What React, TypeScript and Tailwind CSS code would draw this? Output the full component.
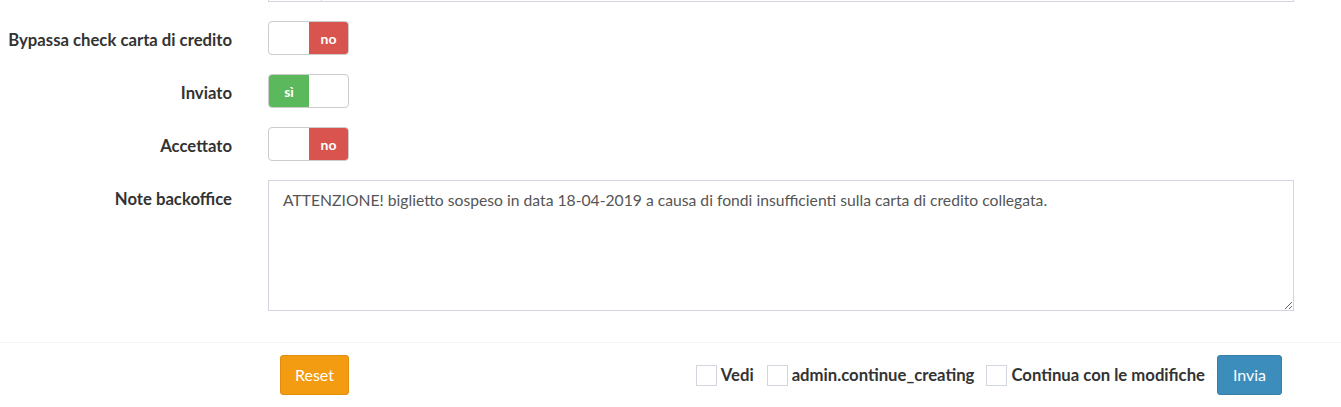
import React from "react";

function Toggle({ on }: { on: boolean }) {
  return (
    <div className="flex h-[34px] w-[81px] overflow-hidden rounded-[4px] border border-[#cccccc] bg-white">
      {on ? (
        <>
          <div className="flex w-[40px] items-center justify-center bg-[#5cb85c] text-[14px] font-bold text-white">sì</div>
          <div className="flex-1" />
        </>
      ) : (
        <>
          <div className="flex-1" />
          <div className="flex w-[39px] items-center justify-center bg-[#d9534f] text-[14px] font-bold text-white">no</div>
        </>
      )}
    </div>
  );
}

function Row({ label, children }: { label: string; children: React.ReactNode }) {
  return (
    <div className="flex">
      <div className="w-[232px] shrink-0 pt-[9px] text-right text-[16.7px] font-bold leading-[20px] text-[#333333]">{label}</div>
      <div className="ml-[36px]">{children}</div>
    </div>
  );
}

function Check({ label }: { label: string }) {
  return (
    <label className="flex items-center">
      <span className="block h-[21px] w-[21px] border border-[#d2d6de] bg-white" />
      <span className="ml-[4px] text-[16.7px] font-bold leading-[20px] text-[#333333]">{label}</span>
    </label>
  );
}

export default function App() {
  return (
    <div className="h-[407px] w-[1341px] overflow-hidden bg-white text-[#333333]" style={{ fontFamily: "Lato, 'Open Sans', sans-serif" }}>
      <div className="relative ml-[268px] h-[2px] w-[1026px] border-x border-b border-[#d2d6de]">
        <div className="absolute left-[52px] top-0 h-[2px] w-px bg-[#d2d6de]" />
      </div>
      <div className="mt-[19px] flex flex-col gap-[19px]">
        <Row label="Bypassa check carta di credito"><Toggle on={false} /></Row>
        <Row label="Inviato"><Toggle on={true} /></Row>
        <Row label="Accettato"><Toggle on={false} /></Row>
        <Row label="Note backoffice">
          <textarea
            className="block h-[131px] w-[1026px] resize-y border border-[#d2d6de] px-[14px] py-[9px] text-[15.7px] leading-[20px] text-[#555555] outline-none"
            defaultValue="ATTENZIONE! biglietto sospeso in data 18-04-2019 a causa di fondi insufficienti sulla carta di credito collegata."
          />
        </Row>
      </div>
      <div className="mt-[31px] border-t border-[#f4f4f4] pt-[12px]">
        <div className="flex items-center">
          <button className="ml-[280px] h-[40px] w-[69px] rounded-[3px] border border-[#e08e0b] bg-[#f39c12] text-[16px] text-white">Reset</button>
          <div className="ml-auto mr-[59px] flex items-center">
            <Check label="Vedi" />
            <div className="ml-[13px]"><Check label="admin.continue_creating" /></div>
            <div className="ml-[12px]"><Check label="Continua con le modifiche" /></div>
            <button className="ml-[12px] h-[40px] w-[65px] rounded-[3px] border border-[#367fa9] bg-[#3c8dbc] text-[16px] text-white">Invia</button>
          </div>
        </div>
      </div>
    </div>
  );
}
